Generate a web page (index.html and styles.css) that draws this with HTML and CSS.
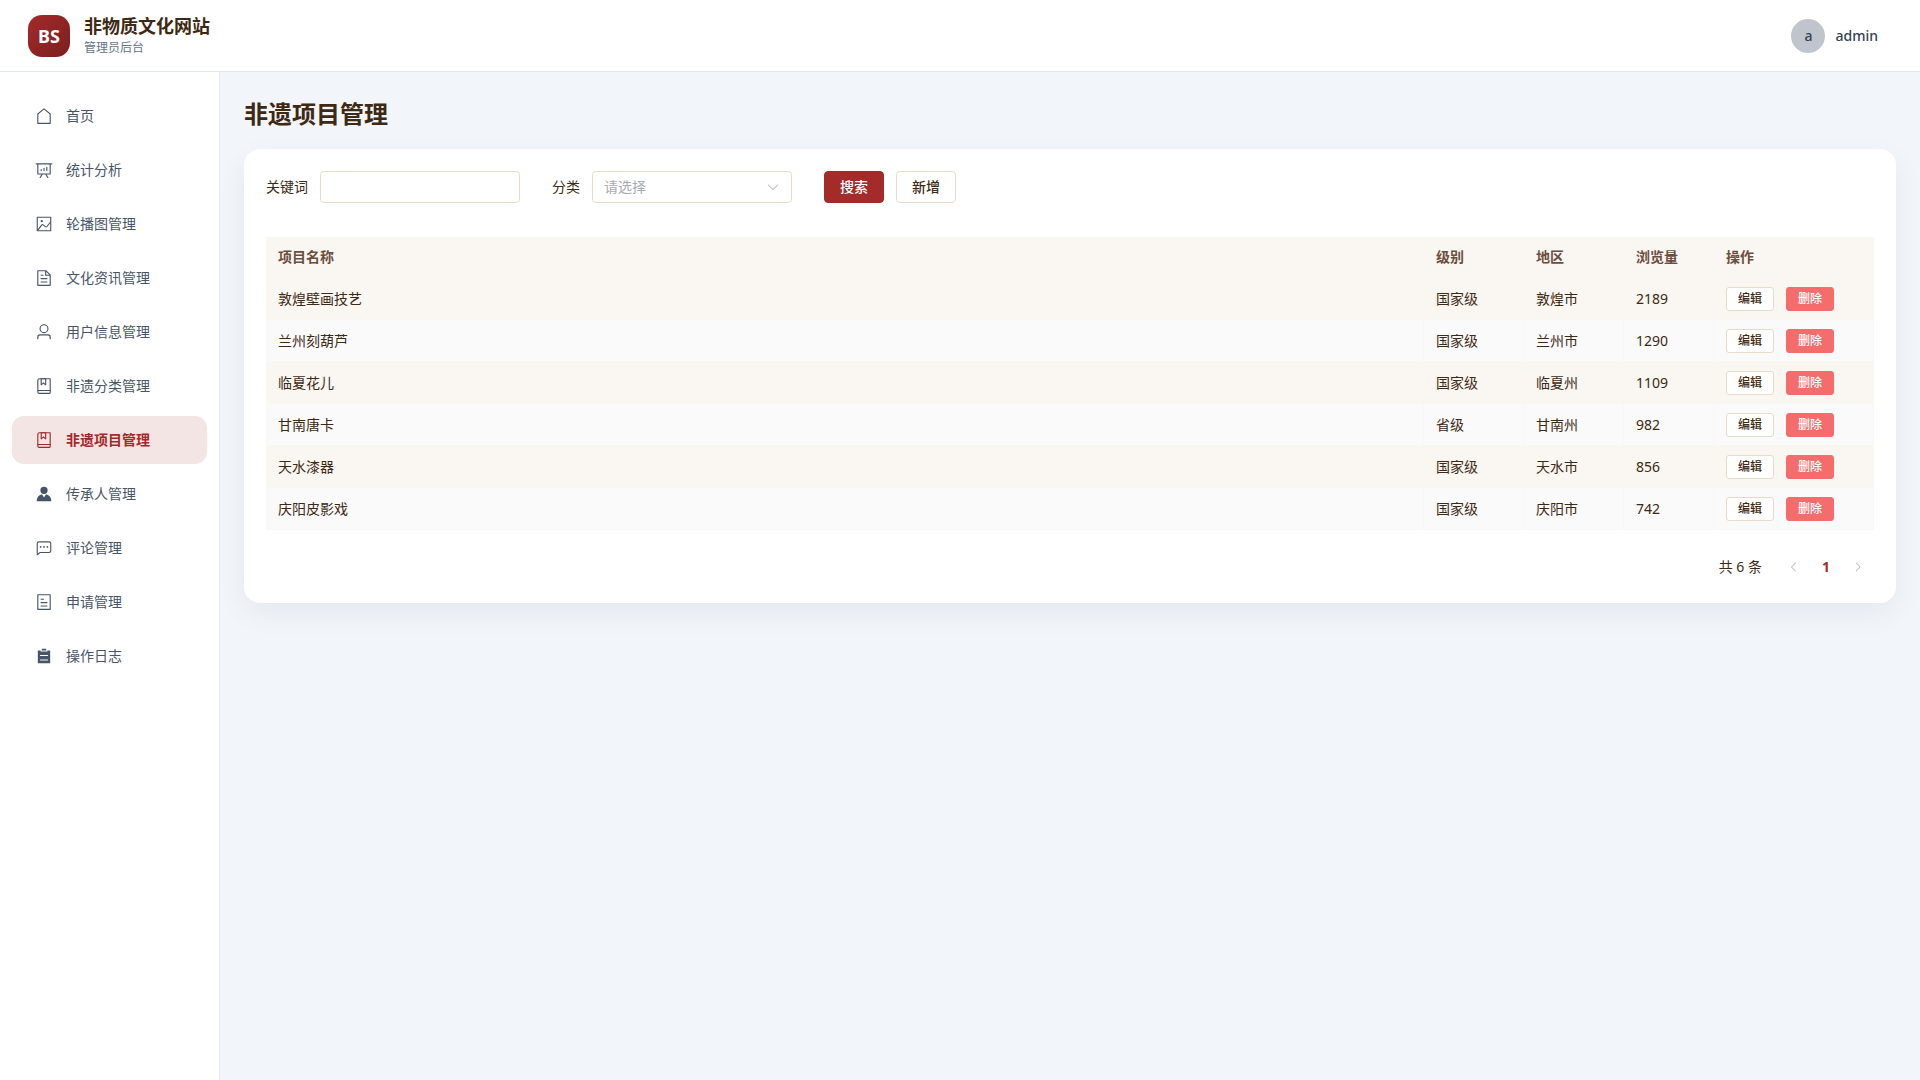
FILE: index.html
```html
<!DOCTYPE html>
<html lang="zh-CN">
<head>
    <meta charset="UTF-8">
    <meta name="viewport" content="width=device-width, initial-scale=1.0">
    <title>非物质文化网站 - 管理员后台</title>
    <link rel="stylesheet" href="styles.css">
</head>
<body>
    <header class="header">
        <div class="brand">
            <div class="logo">BS</div>
            <div>
                <div class="brand-title">非物质文化网站</div>
                <div class="brand-sub">管理员后台</div>
            </div>
        </div>
        <button class="user" type="button">
            <span class="avatar">a</span>
            <span>admin</span>
        </button>
    </header>

    <div class="layout">
        <nav class="sidebar">
            <a class="menu-item" href="#">
                <svg class="icon" viewBox="0 0 1024 1024"><path d="M192 413.952V896h640V413.952L512 147.328zM139.52 374.4l352-293.312a32 32 0 0 1 40.96 0l352 293.312A32 32 0 0 1 896 398.976V928a32 32 0 0 1-32 32H160a32 32 0 0 1-32-32V398.976a32 32 0 0 1 11.52-24.576"/></svg>
                <span>首页</span>
            </a>
            <a class="menu-item" href="#">
                <svg class="icon" viewBox="0 0 1024 1024"><path d="m665.216 768 110.848 192h-73.856L591.36 768H433.024L322.176 960H248.32l110.848-192H160a32 32 0 0 1-32-32V192H64a32 32 0 0 1 0-64h896a32 32 0 1 1 0 64h-64v544a32 32 0 0 1-32 32zM832 192H192v512h640zM352 448a32 32 0 0 1 32 32v64a32 32 0 0 1-64 0v-64a32 32 0 0 1 32-32m160-64a32 32 0 0 1 32 32v128a32 32 0 0 1-64 0V416a32 32 0 0 1 32-32m160-64a32 32 0 0 1 32 32v192a32 32 0 1 1-64 0V352a32 32 0 0 1 32-32"/></svg>
                <span>统计分析</span>
            </a>
            <a class="menu-item" href="#">
                <svg class="icon" viewBox="0 0 1024 1024"><path d="M160 160v704h704V160zm-32-64h768a32 32 0 0 1 32 32v768a32 32 0 0 1-32 32H128a32 32 0 0 1-32-32V128a32 32 0 0 1 32-32"/><path d="M384 288q64 0 64 64t-64 64q-64 0-64-64t64-64M185.408 876.992l-50.816-38.912L350.72 556.032a96 96 0 0 1 134.592-17.856l1.856 1.472 122.88 99.136a32 32 0 0 0 44.992-4.864l216-269.888 49.92 39.936-215.808 269.824-.256.32a96 96 0 0 1-135.04 14.464l-122.88-99.072-.64-.512a32 32 0 0 0-44.8 5.952z"/></svg>
                <span>轮播图管理</span>
            </a>
            <a class="menu-item" href="#">
                <svg class="icon" viewBox="0 0 1024 1024"><path d="M832 384H576V128H192v768h640zm-26.496-64L640 154.496V320zM160 64h480l256 256v608a32 32 0 0 1-32 32H160a32 32 0 0 1-32-32V96a32 32 0 0 1 32-32m160 448h384v64H320zm0-192h160v64H320zm0 384h384v64H320z"/></svg>
                <span>文化资讯管理</span>
            </a>
            <a class="menu-item" href="#">
                <svg class="icon" viewBox="0 0 1024 1024"><path d="M512 512a192 192 0 1 0 0-384 192 192 0 0 0 0 384m0 64a256 256 0 1 1 0-512 256 256 0 0 1 0 512m320 320v-96a96 96 0 0 0-96-96H288a96 96 0 0 0-96 96v96a32 32 0 1 1-64 0v-96a160 160 0 0 1 160-160h448a160 160 0 0 1 160 160v96a32 32 0 1 1-64 0"/></svg>
                <span>用户信息管理</span>
            </a>
            <a class="menu-item" href="#">
                <svg class="icon" viewBox="0 0 1024 1024"><path d="M192 736h640V128H256a64 64 0 0 0-64 64zm64-672h608a32 32 0 0 1 32 32v672a32 32 0 0 1-32 32H160l-32 57.536V192A128 128 0 0 1 256 64"/><path d="M240 800a48 48 0 1 0 0 96h592v-96zm0-64h656v160a64 64 0 0 1-64 64H240a112 112 0 0 1 0-224m144-608v250.88l96-76.8 96 76.8V128zm-64-64h320v381.44a32 32 0 0 1-51.968 24.96L480 384l-108.032 86.4A32 32 0 0 1 320 445.44z"/></svg>
                <span>非遗分类管理</span>
            </a>
            <a class="menu-item active" href="#">
                <svg class="icon" viewBox="0 0 1024 1024"><path d="M192 736h640V128H256a64 64 0 0 0-64 64zm64-672h608a32 32 0 0 1 32 32v672a32 32 0 0 1-32 32H160l-32 57.536V192A128 128 0 0 1 256 64"/><path d="M240 800a48 48 0 1 0 0 96h592v-96zm0-64h656v160a64 64 0 0 1-64 64H240a112 112 0 0 1 0-224m144-608v250.88l96-76.8 96 76.8V128zm-64-64h320v381.44a32 32 0 0 1-51.968 24.96L480 384l-108.032 86.4A32 32 0 0 1 320 445.44z"/></svg>
                <span>非遗项目管理</span>
            </a>
            <a class="menu-item" href="#">
                <svg class="icon" viewBox="0 0 1024 1024"><path d="M628.736 528.896A416 416 0 0 1 928 928H96a415.87 415.87 0 0 1 299.264-399.104L512 704zM720 304a208 208 0 1 1-416 0 208 208 0 0 1 416 0"/></svg>
                <span>传承人管理</span>
            </a>
            <a class="menu-item" href="#">
                <svg class="icon" viewBox="0 0 1024 1024"><path d="M273.536 736H800a64 64 0 0 0 64-64V256a64 64 0 0 0-64-64H224a64 64 0 0 0-64 64v570.88zM296 800 147.968 918.4A32 32 0 0 1 96 893.44V256a128 128 0 0 1 128-128h576a128 128 0 0 1 128 128v416a128 128 0 0 1-128 128z"/><path d="M512 499.2a51.2 51.2 0 1 1 0-102.4 51.2 51.2 0 0 1 0 102.4m192 0a51.2 51.2 0 1 1 0-102.4 51.2 51.2 0 0 1 0 102.4m-384 0a51.2 51.2 0 1 1 0-102.4 51.2 51.2 0 0 1 0 102.4"/></svg>
                <span>评论管理</span>
            </a>
            <a class="menu-item" href="#">
                <svg class="icon" viewBox="0 0 1024 1024"><path d="M192 128v768h640V128zm-32-64h704a32 32 0 0 1 32 32v832a32 32 0 0 1-32 32H160a32 32 0 0 1-32-32V96a32 32 0 0 1 32-32m160 448h384v64H320zm0-192h192v64H320zm0 384h384v64H320z"/></svg>
                <span>申请管理</span>
            </a>
            <a class="menu-item" href="#">
                <svg class="icon" viewBox="0 0 1024 1024"><path d="M704 192h160v736H160V192h160v64h384zM288 512h448v-64H288zm0 256h448v-64H288zm96-576V96h256v96z"/></svg>
                <span>操作日志</span>
            </a>
        </nav>

        <main class="main">
            <h1 class="page-title">非遗项目管理</h1>

            <section class="card">
                <form class="search-form">
                    <div class="form-item">
                        <label for="keyword">关键词</label>
                        <input class="field" id="keyword" type="text">
                    </div>
                    <div class="form-item">
                        <label for="category">分类</label>
                        <div class="select-wrap">
                            <select class="field" id="category">
                                <option value="">请选择</option>
                            </select>
                            <svg class="select-arrow" viewBox="0 0 1024 1024"><path d="M831.872 340.864 512 652.672 192.128 340.864a30.592 30.592 0 0 0-42.752 0 29.12 29.12 0 0 0 0 41.6L489.664 714.24a32 32 0 0 0 44.672 0l340.288-331.712a29.12 29.12 0 0 0 0-41.728 30.592 30.592 0 0 0-42.752 0z"/></svg>
                        </div>
                    </div>
                    <div class="form-actions">
                        <button class="btn btn-primary" type="button">搜索</button>
                        <button class="btn" type="button">新增</button>
                    </div>
                </form>

                <table class="table">
                    <colgroup>
                        <col>
                        <col class="col-level">
                        <col class="col-area">
                        <col class="col-views">
                        <col class="col-actions">
                    </colgroup>
                    <thead>
                        <tr>
                            <th>项目名称</th>
                            <th>级别</th>
                            <th>地区</th>
                            <th>浏览量</th>
                            <th>操作</th>
                        </tr>
                    </thead>
                    <tbody>
                        <tr>
                            <td>敦煌壁画技艺</td>
                            <td>国家级</td>
                            <td>敦煌市</td>
                            <td>2189</td>
                            <td><div class="row-actions"><button class="btn btn-small" type="button">编辑</button><button class="btn btn-small btn-danger" type="button">删除</button></div></td>
                        </tr>
                        <tr>
                            <td>兰州刻葫芦</td>
                            <td>国家级</td>
                            <td>兰州市</td>
                            <td>1290</td>
                            <td><div class="row-actions"><button class="btn btn-small" type="button">编辑</button><button class="btn btn-small btn-danger" type="button">删除</button></div></td>
                        </tr>
                        <tr>
                            <td>临夏花儿</td>
                            <td>国家级</td>
                            <td>临夏州</td>
                            <td>1109</td>
                            <td><div class="row-actions"><button class="btn btn-small" type="button">编辑</button><button class="btn btn-small btn-danger" type="button">删除</button></div></td>
                        </tr>
                        <tr>
                            <td>甘南唐卡</td>
                            <td>省级</td>
                            <td>甘南州</td>
                            <td>982</td>
                            <td><div class="row-actions"><button class="btn btn-small" type="button">编辑</button><button class="btn btn-small btn-danger" type="button">删除</button></div></td>
                        </tr>
                        <tr>
                            <td>天水漆器</td>
                            <td>国家级</td>
                            <td>天水市</td>
                            <td>856</td>
                            <td><div class="row-actions"><button class="btn btn-small" type="button">编辑</button><button class="btn btn-small btn-danger" type="button">删除</button></div></td>
                        </tr>
                        <tr>
                            <td>庆阳皮影戏</td>
                            <td>国家级</td>
                            <td>庆阳市</td>
                            <td>742</td>
                            <td><div class="row-actions"><button class="btn btn-small" type="button">编辑</button><button class="btn btn-small btn-danger" type="button">删除</button></div></td>
                        </tr>
                    </tbody>
                </table>

                <div class="pagination">
                    <span class="total">共 6 条</span>
                    <button class="pager" type="button" aria-label="上一页" disabled>
                        <svg viewBox="0 0 1024 1024"><path d="M609.408 149.376 277.76 489.6a32 32 0 0 0 0 44.672l331.648 340.352a29.12 29.12 0 0 0 41.728 0 30.592 30.592 0 0 0 0-42.752L339.264 511.936l311.872-319.872a30.592 30.592 0 0 0 0-42.688 29.12 29.12 0 0 0-41.728 0z"/></svg>
                    </button>
                    <button class="pager current" type="button">1</button>
                    <button class="pager" type="button" aria-label="下一页" disabled>
                        <svg viewBox="0 0 1024 1024"><path d="M340.864 149.312a30.592 30.592 0 0 0 0 42.752L652.736 512 340.864 831.872a30.592 30.592 0 0 0 0 42.752 29.12 29.12 0 0 0 41.728 0L714.24 534.336a32 32 0 0 0 0-44.672L382.592 149.376a29.12 29.12 0 0 0-41.728 0z"/></svg>
                    </button>
                </div>
            </section>
        </main>
    </div>
</body>
</html>
```
FILE: styles.css
```css
* {
    box-sizing: border-box;
}
body {
    margin: 0;
    min-height: 100vh;
    display: flex;
    flex-direction: column;
    font-family: "Noto Sans", "Noto Sans CJK SC", sans-serif;
    font-size: 14px;
    line-height: 20px;
    color: #3d2914;
    background-color: #f2f5fa;
}
button, input, select {
    font-family: inherit;
    font-size: 14px;
    line-height: 20px;
}

/* 顶部栏 */
.header {
    display: flex;
    align-items: center;
    justify-content: space-between;
    height: 72px;
    padding: 0 28px;
    background-color: #fff;
    border-bottom: 1px solid #e2e8f0;
}
.brand {
    display: flex;
    align-items: center;
    gap: 14px;
}
.logo {
    display: flex;
    align-items: center;
    justify-content: center;
    width: 42px;
    height: 42px;
    border-radius: 14px;
    background: linear-gradient(135deg, #a52a2a, #7a1f1f);
    color: #fff;
    font-size: 18px;
    font-weight: 700;
}
.brand-title {
    font-size: 18px;
    font-weight: 700;
    line-height: 24px;
}
.brand-sub {
    font-size: 12px;
    line-height: 20px;
    color: #64748b;
}
.user {
    display: flex;
    align-items: center;
    gap: 10px;
    padding: 4px 14px;
    border: none;
    background: none;
    color: #334155;
    font-weight: 500;
    cursor: pointer;
}
.avatar {
    display: flex;
    align-items: center;
    justify-content: center;
    width: 34px;
    height: 34px;
    border-radius: 50%;
    background-color: #c0c4cc;
}

/* 侧边菜单 */
.layout {
    flex: 1;
    display: flex;
}
.sidebar {
    display: flex;
    flex-direction: column;
    gap: 6px;
    width: 220px;
    padding: 20px 12px;
    background-color: #fff;
    border-right: 1px solid #e2e8f0;
}
.menu-item {
    display: flex;
    align-items: center;
    gap: 13px;
    height: 48px;
    padding: 0 23px;
    border-radius: 12px;
    color: #475569;
    text-decoration: none;
}
.menu-item.active {
    background-color: #f4e5e5;
    color: #a52a2a;
    font-weight: 600;
}
.icon {
    width: 18px;
    height: 18px;
    fill: currentColor;
}

/* 内容区 */
.main {
    flex: 1;
    padding: 24px;
}
.page-title {
    margin: 0 0 17px;
    font-size: 24px;
    font-weight: 700;
    line-height: 36px;
}
.card {
    padding: 22px;
    border-radius: 16px;
    background-color: #fff;
    box-shadow: 0 10px 30px rgba(15, 23, 42, 0.06);
}
.search-form {
    display: flex;
    flex-wrap: wrap;
    gap: 32px;
    margin-bottom: 34px;
}
.form-item {
    display: flex;
    align-items: center;
    gap: 12px;
}
.field {
    display: block;
    width: 200px;
    height: 32px;
    padding: 0 11px;
    border: 1px solid #e8dcc8;
    border-radius: 4px;
    background-color: #fff;
    color: #3d2914;
}
select.field {
    appearance: none;
    color: #a8abb2;
}
.select-wrap {
    position: relative;
}
.select-arrow {
    position: absolute;
    top: 9px;
    right: 12px;
    width: 14px;
    height: 14px;
    fill: #a8abb2;
    pointer-events: none;
}
.form-actions,
.row-actions {
    display: flex;
    gap: 12px;
}
.btn {
    height: 32px;
    padding: 0 15px;
    border: 1px solid #e8dcc8;
    border-radius: 4px;
    background-color: #fff;
    color: #3d2914;
    font-weight: 500;
    cursor: pointer;
}
.btn-primary {
    border-color: #a52a2a;
    background-color: #a52a2a;
    color: #fff;
}
.btn-small {
    height: 24px;
    padding: 0 11px;
    border-radius: 3px;
    font-size: 12px;
}
.btn-danger {
    border-color: #f56c6c;
    background-color: #f56c6c;
    color: #fff;
}

/* 表格 */
.table {
    width: 100%;
    table-layout: fixed;
    border-collapse: separate;
    border-spacing: 0;
}
.col-level,
.col-area {
    width: 100px;
}
.col-views {
    width: 90px;
}
.col-actions {
    width: 160px;
}
.table th,
.table td {
    height: 42px;
    padding: 0 12px;
    border-right: 1px solid #faf6f1;
    border-bottom: 1px solid #faf6f1;
    text-align: left;
}
.table td:first-child {
    padding-left: 11px;
    border-left: 1px solid #faf6f1;
}
.table th {
    height: 41px;
    background-color: #faf6f1;
    color: #6b4e3d;
    font-weight: 600;
}
.table tbody tr {
    background-color: #faf6f1;
}
.table tbody tr:nth-child(even) {
    background-color: #fafafa;
}

/* 分页 */
.pagination {
    display: flex;
    align-items: center;
    justify-content: flex-end;
    margin-top: 23px;
}
.total {
    margin-right: 16px;
}
.pager {
    display: flex;
    align-items: center;
    justify-content: center;
    width: 32px;
    height: 28px;
    padding: 0;
    border: none;
    background: none;
    color: #3d2914;
}
.pager svg {
    width: 12px;
    height: 12px;
    fill: #a8abb2;
}
.pager.current {
    color: #a52a2a;
    font-weight: 700;
}
```
